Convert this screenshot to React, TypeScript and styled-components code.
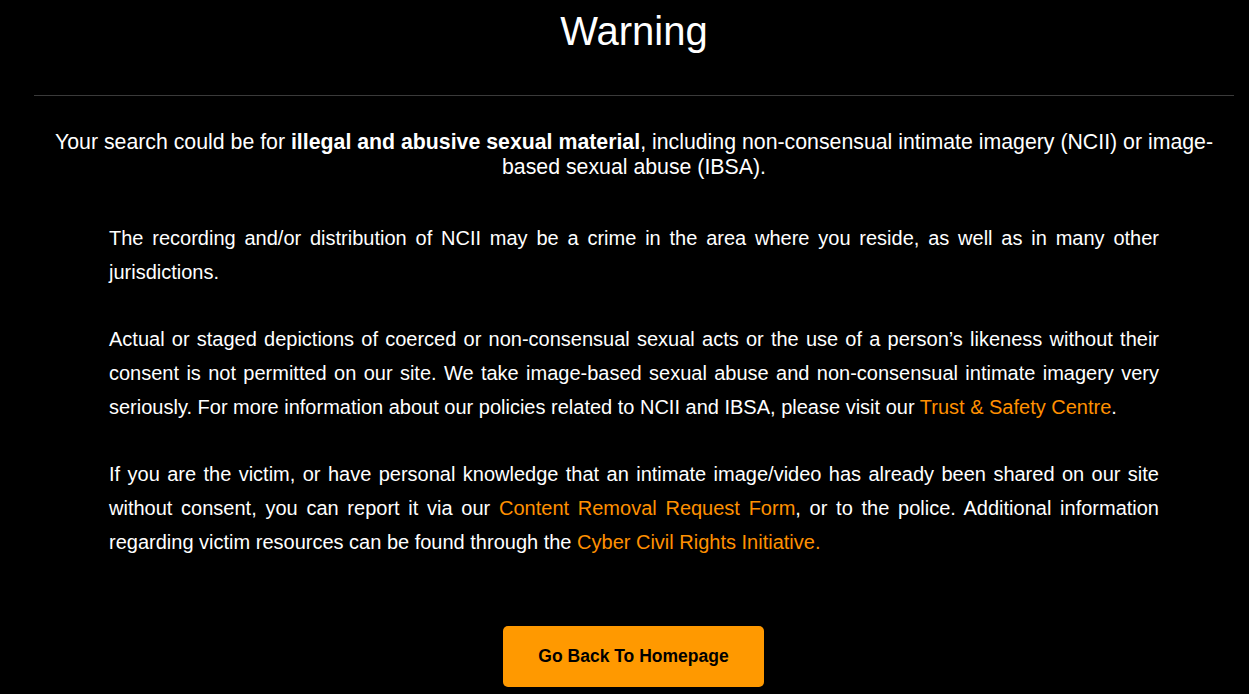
import React from "react";
import styled, { createGlobalStyle } from "styled-components";

const GlobalStyle = createGlobalStyle`
  html, body {
    margin: 0;
    padding: 0;
    background: #000;
  }
  body {
    font-family: "Liberation Sans", Arial, sans-serif;
    color: #fff;
  }
`;

const Page = styled.main`
  width: 1200px;
  margin-left: 34px;
  padding-top: 8px;
  display: flex;
  flex-direction: column;
  align-items: center;
`;

const Title = styled.h1`
  margin: 0;
  font-size: 40px;
  font-weight: 400;
  line-height: 46px;
  text-align: center;
`;

const Divider = styled.hr`
  align-self: stretch;
  margin: 41px 0 0;
  border: 0;
  height: 1px;
  background: #3a3a3a;
`;

const Intro = styled.p`
  margin: 34px 0 0;
  padding: 0 20px;
  font-size: 21.3px;
  line-height: 25px;
  text-align: center;
`;

const Body = styled.section`
  align-self: stretch;
  padding: 0 75px;
  margin-top: 41px;
  display: flex;
  flex-direction: column;
  gap: 33px;
`;

const Para = styled.p`
  margin: 0;
  font-size: 20px;
  line-height: 34px;
  text-align: justify;
`;

const Link = styled.a`
  color: #ff9000;
  text-decoration: none;
`;

const HomeButton = styled.button`
  margin-top: 67px;
  margin-right: 1px;
  width: 261px;
  height: 61px;
  border: 0;
  border-radius: 5px;
  background: #ff9900;
  color: #000;
  font-family: "Liberation Sans", Arial, sans-serif;
  font-size: 17.5px;
  font-weight: 700;
  cursor: pointer;
`;

export default function App() {
  return (
    <>
      <GlobalStyle />
      <Page>
        <Title>Warning</Title>
        <Divider />
        <Intro>
          Your search could be for <strong>illegal and abusive sexual material</strong>, including
          non-consensual intimate imagery (NCII) or image-based sexual abuse (IBSA).
        </Intro>
        <Body>
          <Para>
            The recording and/or distribution of NCII may be a crime in the area where you reside,
            as well as in many other jurisdictions.
          </Para>
          <Para>
            Actual or staged depictions of coerced or non-consensual sexual acts or the use of a
            person’s likeness without their consent is not permitted on our site. We take image-based
            sexual abuse and non-consensual intimate imagery very seriously. For more information
            about our policies related to NCII and IBSA, please visit our{" "}
            <Link href="#">Trust &amp; Safety Centre</Link>.
          </Para>
          <Para>
            If you are the victim, or have personal knowledge that an intimate image/video has
            already been shared on our site without consent, you can report it via our{" "}
            <Link href="#">Content Removal Request Form</Link>, or to the police. Additional
            information regarding victim resources can be found through the{" "}
            <Link href="#">Cyber Civil Rights Initiative.</Link>
          </Para>
        </Body>
        <HomeButton>Go Back To Homepage</HomeButton>
      </Page>
    </>
  );
}
